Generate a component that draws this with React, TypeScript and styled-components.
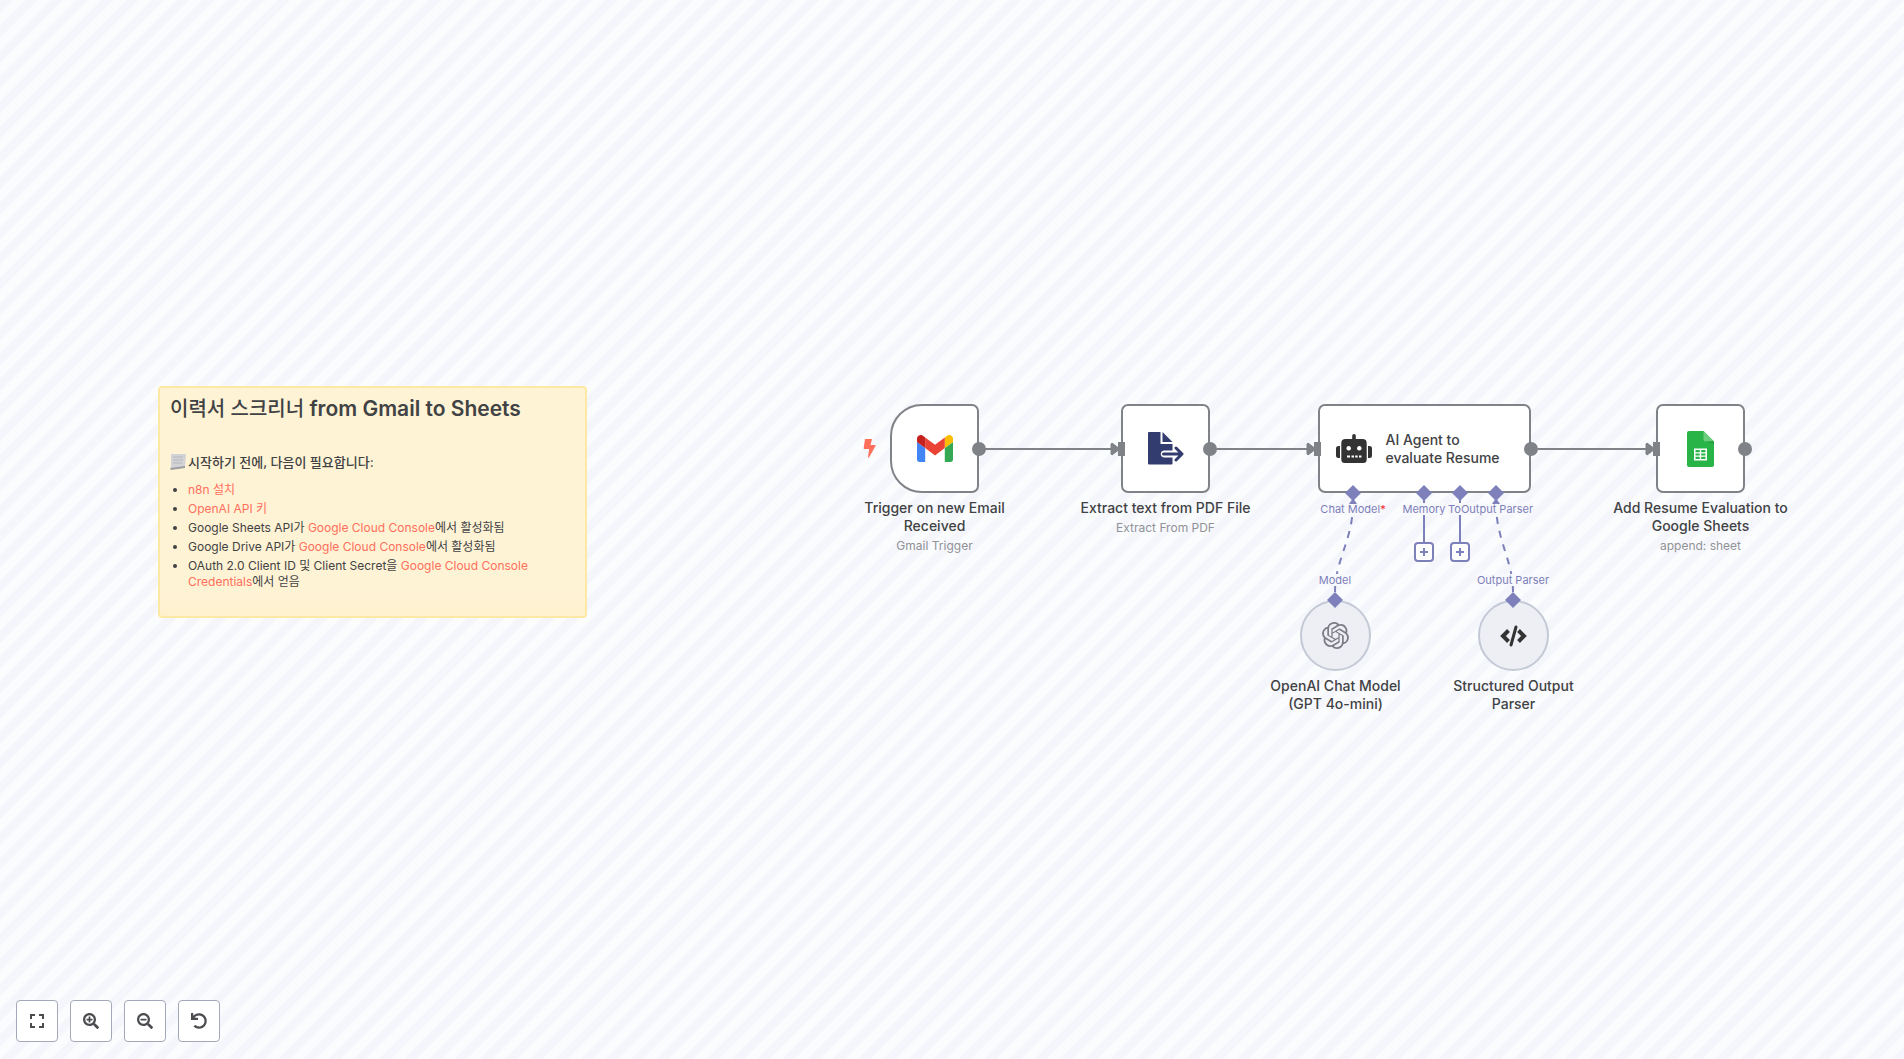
import React from 'react';
import styled, { createGlobalStyle } from 'styled-components';
import { FaSearchPlus, FaSearchMinus, FaUndo } from 'react-icons/fa';

const GlobalStyle = createGlobalStyle`
  * { box-sizing: border-box; }
  html, body, #root { height: 100%; }
  body {
    margin: 0;
    overflow: hidden;
    color: #414244;
    font-family: Inter, "Noto Sans CJK KR", sans-serif;
  }
`;

const Canvas = styled.main`
  position: relative;
  width: 100%;
  height: 100%;
  overflow: hidden;
  background: #fbfcfe;
`;

const Layer = styled.svg`
  position: absolute;
  inset: 0;
  width: 100%;
  height: 100%;
  pointer-events: none;
`;

const Note = styled.section`
  position: absolute;
  left: 158px;
  top: 386px;
  width: 429px;
  height: 232px;
  padding: 7px 10px;
  border: 2px solid #fde9a4;
  border-radius: 4px;
  background: linear-gradient(to bottom, #fff3d5 90%, #fff1cd);
  font-size: 12px;
  line-height: 16px;
`;

const NoteTitle = styled.h1`
  margin: 0 0 30px;
  font-size: 21px;
  font-weight: 600;
  line-height: 27px;
`;

const TitleHangul = styled.span`
  font-size: 20px;
  font-weight: 500;
`;

const NoteSubtitle = styled.h2`
  display: flex;
  align-items: center;
  gap: 2px;
  margin: 0 0 11px;
  font-size: 13px;
  font-weight: 500;
  line-height: 18px;
`;

const NoteList = styled.ul`
  display: flex;
  flex-direction: column;
  gap: 3px;
  margin: 0;
  padding: 0 0 0 18px;
`;

const NoteLink = styled.a`
  color: #ff6f5c;
  text-decoration: none;
`;

const NodePlace = styled.div<{ $x: number; $y: number }>`
  position: absolute;
  left: ${(p) => p.$x - 100}px;
  top: ${(p) => p.$y}px;
  width: 201px;
  display: flex;
  flex-direction: column;
  align-items: center;
`;

const NodeBox = styled.div<{ $trigger?: boolean; $wide?: boolean }>`
  display: flex;
  align-items: center;
  justify-content: center;
  gap: 14px;
  width: ${(p) => (p.$wide ? 213 : 89)}px;
  height: 89px;
  flex-shrink: 0;
  border: 2px solid #7f8287;
  border-radius: ${(p) => (p.$trigger ? '32px 7px 7px 32px' : '7px')};
  background: #fff;
`;

const NodeCircle = styled.div`
  display: flex;
  align-items: center;
  justify-content: center;
  width: 71px;
  height: 71px;
  border: 2px solid #c3c9d5;
  border-radius: 50%;
  background: #eeeff5;
`;

const NodeName = styled.div<{ $narrow?: boolean }>`
  margin-top: 6px;
  width: ${(p) => (p.$narrow ? 143 : 183)}px;
  font-size: 14px;
  font-weight: 500;
  line-height: 18px;
  text-align: center;
`;

const InnerName = styled.div`
  width: 128px;
  font-size: 14px;
  font-weight: 500;
  line-height: 18px;
`;

const NodeDetail = styled.div`
  margin-top: 3px;
  color: #909298;
  font-size: 12px;
  line-height: 16px;
`;

const PortLabel = styled.span<{ $x: number; $y: number }>`
  position: absolute;
  left: ${(p) => p.$x}px;
  top: ${(p) => p.$y}px;
  transform: translateX(-50%);
  color: #7d80ba;
  background: #f8f9fd;
  font-size: 11px;
  line-height: 12px;
  white-space: nowrap;
`;

const Required = styled.span`
  color: #f5202c;
`;

const AddButton = styled.button<{ $x: number }>`
  position: absolute;
  left: ${(p) => p.$x}px;
  top: 542px;
  width: 20px;
  height: 20px;
  padding: 0;
  display: grid;
  place-items: center;
  border: 2px solid #7d80ba;
  border-radius: 4px;
  background: #fff;
  color: #7d80ba;
`;

const Trigger = styled.div`
  position: absolute;
  left: 863px;
  top: 438px;
  color: #ff6f5c;
`;

const Controls = styled.nav`
  position: absolute;
  left: 16px;
  bottom: 17px;
  display: flex;
  gap: 12px;
`;

const ControlButton = styled.button`
  display: grid;
  place-items: center;
  width: 42px;
  height: 42px;
  padding: 0;
  border: 1px solid #a3a9b8;
  border-radius: 4px;
  background: #fff;
  color: #4b4c4f;
`;

const GAP = 17.83;

function Stripes() {
  return (
    <Layer aria-hidden="true">
      <defs>
        <pattern
          id="stripes"
          patternUnits="userSpaceOnUse"
          width={GAP}
          height={GAP}
          patternTransform="translate(-6 0) rotate(135)"
        >
          <path d={`M0 ${GAP / 2} H${GAP}`} stroke="#f5f6fb" strokeWidth={GAP / 2} />
        </pattern>
      </defs>
      <rect width="100%" height="100%" fill="url(#stripes)" />
    </Layer>
  );
}

function Arrow({ from, to }: { from: number; to: number }) {
  return (
    <g fill="#7f8287">
      <path d={`M${from} 449 H${to - 8}`} stroke="#7f8287" strokeWidth="2" />
      <path d={`M${to - 10} 444 l1 -1 l8 6 l-8 6 l-1 -1 z`} stroke="#7f8287" />
    </g>
  );
}

function Connections() {
  return (
    <Layer aria-hidden="true">
      <Arrow from={985} to={1121} />
      <Arrow from={1217} to={1317} />
      <Arrow from={1538} to={1656} />
      <g stroke="#7d80ba" strokeWidth="2" fill="none">
        <path d="M1335 592 C1335 560 1353 540 1353 503" strokeDasharray="7 7" />
        <path d="M1513 592 C1513 560 1496 540 1496 503" strokeDasharray="7 7" />
        <path d="M1424 498 V542 M1460 498 V542" />
      </g>
    </Layer>
  );
}

const diamonds = [
  [1353, 493],
  [1424, 493],
  [1460, 493],
  [1496, 493],
  [1335, 600],
  [1513, 600],
];

function Ports() {
  return (
    <Layer aria-hidden="true">
      <g fill="#7f8287">
        {[979, 1210, 1531, 1745].map((x) => (
          <circle key={x} cx={x} cy="449" r="7" />
        ))}
        {[1118, 1314, 1653].map((x) => (
          <rect key={x} x={x} y="442" width="7" height="14" />
        ))}
      </g>
      <g fill="#7d80ba">
        {diamonds.map(([x, y]) => (
          <path key={`${x}-${y}`} d={`M${x} ${y - 8} l8 8 l-8 8 l-8 -8 z`} />
        ))}
        <path d="M1353 498 l4 6 h-8 z M1496 498 l4 6 h-8 z" />
      </g>
    </Layer>
  );
}

function GmailIcon() {
  return (
    <svg width="36" height="27" viewBox="0 0 36 27" aria-hidden="true">
      <path fill="#4285f4" d="M2.5 27H8.2V13.1L0 7V24.5C0 25.9 1.1 27 2.5 27Z" />
      <path fill="#34a853" d="M27.8 27H33.5C34.9 27 36 25.9 36 24.5V7L27.8 13.1Z" />
      <path fill="#fbbc04" d="M27.8 2.5V13.1L36 7V3.7C36 .6 32.5-1.1 30.1.7Z" />
      <path fill="#ea4335" d="M8.2 13.1V2.5L18 9.8L27.8 2.5V13.1L18 20.4Z" />
      <path fill="#c5221f" d="M0 3.7V7L8.2 13.1V2.5L5.9.7C3.5-1.1 0 .6 0 3.7Z" />
    </svg>
  );
}

function ExtractIcon() {
  return (
    <svg width="36" height="33" viewBox="0 0 36 33" aria-hidden="true">
      <path fill="#333c6e" d="M1 0H12.5V12H24.5V18.5H16.5C11.5 18.5 11.5 25.5 16.5 25.5H24.5V31.5Q24.5 32.5 23.5 32.5H1Q0 32.5 0 31.5V1Q0 0 1 0Z" />
      <path fill="#333c6e" d="M14.5 0L24.5 10H14.5Z" />
      <path fill="none" stroke="#333c6e" strokeWidth="3" strokeLinecap="round" strokeLinejoin="round" d="M15.5 22H33.5M28 16L34 22L28 28" />
    </svg>
  );
}

function RobotIcon() {
  return (
    <svg width="36" height="29" viewBox="0 0 36 29" fill="#333" aria-hidden="true">
      <path d="M4 12V24H2.5Q0 24 0 21.5V14.5Q0 12 2.5 12ZM32 12V24H33.5Q36 24 36 21.5V14.5Q36 12 33.5 12Z" />
      <path
        fillRule="evenodd"
        d="M16.2 5V1.8a1.8 1.8 0 0 1 3.6 0V5H26.5Q30.7 5 30.7 9.2V25.5Q30.7 29 27.2 29H8.8Q5.3 29 5.3 25.5V9.2Q5.3 5 9.5 5ZM12.7 12a2.3 2.3 0 1 0 .01 0ZM23.3 12a2.3 2.3 0 1 0 .01 0ZM11 21.500v2h3v-2ZM15.500 21.500v2h2.500v-2ZM19.200 21.500v2h2.500v-2ZM23 21.500v2h2.500v-2Z"
      />
    </svg>
  );
}

function SheetsIcon() {
  return (
    <svg width="27" height="36" viewBox="0 0 27 36" aria-hidden="true">
      <path fill="#28b446" d="M2 0H16.5L27 10.5V34Q27 36 25 36H2Q0 36 0 34V2Q0 0 2 0Z" />
      <path fill="#6ace7c" d="M16.5 0L27 10.5H18.5Q16.5 10.5 16.5 8.5Z" />
      <path fill="#219b3b" d="M19 10.5H27V13Z" />
      <path fill="#fff" fillRule="evenodd" d="M7 17.5H20V29.5H7ZM8.5 19H12.7V21.3H8.5ZM14.2 19H18.5V21.3H14.2ZM8.5 22.5H12.7V24.6H8.5ZM14.2 22.5H18.5V24.6H14.2ZM8.5 25.8H12.7V28H8.5ZM14.2 25.8H18.5V28H14.2Z" />
    </svg>
  );
}

function OpenAiIcon() {
  return (
    <svg width="27" height="27" viewBox="0 0 24 24" fill="#7d7d87" aria-hidden="true">
      <path d="M22.2819 9.8211a5.9847 5.9847 0 0 0-.5157-4.9108 6.0462 6.0462 0 0 0-6.5098-2.9A6.0651 6.0651 0 0 0 4.9807 4.1818a5.9847 5.9847 0 0 0-3.9977 2.9 6.0462 6.0462 0 0 0 .7427 7.0966 5.98 5.98 0 0 0 .511 4.9107 6.051 6.051 0 0 0 6.5146 2.9001A5.9847 5.9847 0 0 0 13.2599 24a6.0557 6.0557 0 0 0 5.7718-4.2058 5.9894 5.9894 0 0 0 3.9977-2.9001 6.0557 6.0557 0 0 0-.7475-7.0729zm-9.022 12.6081a4.4755 4.4755 0 0 1-2.8764-1.0408l.1419-.0804 4.7783-2.7582a.7948.7948 0 0 0 .3927-.6813v-6.7369l2.02 1.1686a.071.071 0 0 1 .038.052v5.5826a4.504 4.504 0 0 1-4.4945 4.4944zm-9.6607-4.1254a4.4708 4.4708 0 0 1-.5346-3.0137l.142.0852 4.783 2.7582a.7712.7712 0 0 0 .7806 0l5.8428-3.3685v2.3324a.0804.0804 0 0 1-.0332.0615L9.74 19.9502a4.4992 4.4992 0 0 1-6.1408-1.6464zM2.3408 7.8956a4.485 4.485 0 0 1 2.3655-1.9728V11.6a.7664.7664 0 0 0 .3879.6765l5.8144 3.3543-2.0201 1.1685a.0757.0757 0 0 1-.071 0l-4.8303-2.7865A4.504 4.504 0 0 1 2.3408 7.872zm16.5963 3.8558L13.1038 8.364 15.1192 7.2a.0757.0757 0 0 1 .071 0l4.8303 2.7913a4.4944 4.4944 0 0 1-.6765 8.1042v-5.6772a.79.79 0 0 0-.407-.667zm2.0107-3.0231l-.142-.0852-4.7735-2.7818a.7759.7759 0 0 0-.7854 0L9.409 9.2297V6.8974a.0662.0662 0 0 1 .0284-.0615l4.8303-2.7866a4.4992 4.4992 0 0 1 6.6802 4.66zM8.3065 12.863l-2.02-1.1638a.0804.0804 0 0 1-.038-.0567V6.0742a4.4992 4.4992 0 0 1 7.3757-3.4537l-.142.0805L8.704 5.459a.7948.7948 0 0 0-.3927.6813zm1.0976-2.3654l2.602-1.4998 2.6069 1.4998v2.9994l-2.5974 1.4997-2.6067-1.4997Z" />
    </svg>
  );
}

function CodeIcon() {
  return (
    <svg width="27" height="22" viewBox="0 0 27 22" fill="none" stroke="#333" strokeWidth="3" aria-hidden="true">
      <path d="M8.5 5.5L3 11L8.5 16.5M18.5 5.5L24 11L18.5 16.5" strokeWidth="4" />
      <path d="M16 2L11 20" strokeLinecap="round" />
    </svg>
  );
}

function PageIcon() {
  return (
    <svg width="16" height="18" viewBox="0 0 16 18" aria-hidden="true">
      <path fill="#d2d3d5" d="M1 1H16L15 14L1 15Z" />
      <path stroke="#b6b8bb" d="M3 4H13M3 7H13M3 10H12" />
      <path fill="#9c9da1" d="M0 15L15 13V15L1 17Z" />
    </svg>
  );
}

function Plus() {
  return (
    <svg width="10" height="10" viewBox="0 0 10 10" stroke="currentColor" strokeWidth="2" aria-hidden="true">
      <path d="M1 5H9M5 1V9" />
    </svg>
  );
}

const consoleUrl = 'https://console.cloud.google.com/';

export default function App() {
  return (
    <>
      <GlobalStyle />
      <Canvas>
        <Stripes />
        <Note>
          <NoteTitle>
            <TitleHangul>이력서 스크리너</TitleHangul> from Gmail to Sheets
          </NoteTitle>
          <NoteSubtitle>
            <PageIcon />
            시작하기 전에, 다음이 필요합니다:
          </NoteSubtitle>
          <NoteList>
            <li><NoteLink href="https://docs.n8n.io/">n8n 설치</NoteLink></li>
            <li><NoteLink href="https://platform.openai.com/">OpenAI API 키</NoteLink></li>
            <li>Google Sheets API가 <NoteLink href={consoleUrl}>Google Cloud Console</NoteLink>에서 활성화됨</li>
            <li>Google Drive API가 <NoteLink href={consoleUrl}>Google Cloud Console</NoteLink>에서 활성화됨</li>
            <li>OAuth 2.0 Client ID 및 Client Secret을 <NoteLink href={consoleUrl}>Google Cloud Console Credentials</NoteLink>에서 얻음</li>
          </NoteList>
        </Note>

        <Connections />

        <Trigger>
          <svg width="13" height="20" viewBox="0 0 13 20" fill="currentColor" aria-hidden="true">
            <path d="M2 1H9L7.5 7H12Q13 7 12.5 8L6 19.5Q5 20 5 19L6.2 11H1.5Q.5 11 .7 10Z" />
          </svg>
        </Trigger>

        <NodePlace $x={934} $y={404}>
          <NodeBox $trigger><GmailIcon /></NodeBox>
          <NodeName>Trigger on new Email Received</NodeName>
          <NodeDetail>Gmail Trigger</NodeDetail>
        </NodePlace>
        <NodePlace $x={1165} $y={404}>
          <NodeBox><ExtractIcon /></NodeBox>
          <NodeName>Extract text from PDF File</NodeName>
          <NodeDetail>Extract From PDF</NodeDetail>
        </NodePlace>
        <NodePlace $x={1424} $y={404}>
          <NodeBox $wide>
            <RobotIcon />
            <InnerName>AI Agent to evaluate Resume</InnerName>
          </NodeBox>
        </NodePlace>
        <NodePlace $x={1700} $y={404}>
          <NodeBox><SheetsIcon /></NodeBox>
          <NodeName>Add Resume Evaluation to Google Sheets</NodeName>
          <NodeDetail>append: sheet</NodeDetail>
        </NodePlace>
        <NodePlace $x={1335} $y={600}>
          <NodeCircle><OpenAiIcon /></NodeCircle>
          <NodeName $narrow>OpenAI Chat Model (GPT 4o-mini)</NodeName>
        </NodePlace>
        <NodePlace $x={1513} $y={600}>
          <NodeCircle><CodeIcon /></NodeCircle>
          <NodeName $narrow>Structured Output Parser</NodeName>
        </NodePlace>

        <PortLabel $x={1353} $y={503}>Chat Model<Required>*</Required></PortLabel>
        <PortLabel $x={1424} $y={503}>Memory</PortLabel>
        <PortLabel $x={1459} $y={503}>Tool</PortLabel>
        <PortLabel $x={1497} $y={503}>Output Parser</PortLabel>
        <PortLabel $x={1335} $y={574}>Model</PortLabel>
        <PortLabel $x={1513} $y={574}>Output Parser</PortLabel>

        <Ports />

        <AddButton $x={1414} aria-label="Add memory"><Plus /></AddButton>
        <AddButton $x={1450} aria-label="Add tool"><Plus /></AddButton>

        <Controls aria-label="Canvas controls">
          <ControlButton aria-label="Fit view">
            <svg width="16" height="16" viewBox="0 0 16 16" fill="none" stroke="currentColor" strokeWidth="2" aria-hidden="true">
              <path d="M2 6V2H6M10 2H14V6M14 10V14H10M6 14H2V10" />
            </svg>
          </ControlButton>
          <ControlButton aria-label="Zoom in"><FaSearchPlus size={16} /></ControlButton>
          <ControlButton aria-label="Zoom out"><FaSearchMinus size={16} /></ControlButton>
          <ControlButton aria-label="Reset zoom"><FaUndo size={16} /></ControlButton>
        </Controls>
      </Canvas>
    </>
  );
}
